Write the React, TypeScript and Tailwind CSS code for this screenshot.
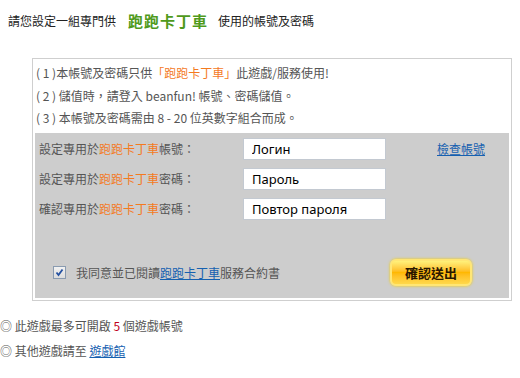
import React from 'react';

const font = { fontFamily: '"Noto Sans CJK TC", "Noto Sans", sans-serif' };

const Kart = () => <span className="text-[#f47a1f]">跑跑卡丁車</span>;

const rows = [
    { prefix: '設定專用於', suffix: '帳號：', value: 'Логин', link: true },
    { prefix: '設定專用於', suffix: '密碼：', value: 'Пароль', link: false },
    { prefix: '確認專用於', suffix: '密碼：', value: 'Повтор пароля', link: false },
];

export default function App() {
    return (
        <div className="w-[520px] h-[378px] bg-white text-[12px] text-[#555] overflow-hidden" style={font}>
            <div className="flex items-center h-[20px] mt-[11px] pl-[8px] text-[#222]">
                <span>請您設定一組專門供</span>
                <span className="ml-[12px] mr-[10px] text-[15px] font-bold tracking-[1px] text-[#4f9a1c]">跑跑卡丁車</span>
                <span>使用的帳號及密碼</span>
            </div>

            <div className="ml-[32px] mt-[27px] w-[480px] border border-[#cfcfcf] p-[2px]">
                <div className="pt-[1px] pl-[1px] leading-[22.5px] text-[#555]">
                    <p>( 1 )本帳號及密碼只供<span className="text-[#f47a1f]">「跑跑卡丁車」</span>此遊戲/服務使用!</p>
                    <p>( 2 ) 儲值時，請登入 beanfun! 帳號、密碼儲值。</p>
                    <p>( 3 ) 本帳號及密碼需由 8 - 20 位英數字組合而成。</p>
                </div>

                <div className="mt-[3px] bg-[#cdcdcd] pt-[1px] pb-[11px]">
                    {rows.map(row => (
                        <div key={row.value} className="flex items-center h-[30px] pl-[4px]">
                            <div className="w-[204px] text-[#555]">
                                {row.prefix}<Kart />{row.suffix}
                            </div>
                            <input
                                readOnly
                                defaultValue={row.value}
                                className="w-[143px] h-[22px] bg-white border border-[#c3c9d1] pl-[8px] text-[13px] text-black outline-none"
                                style={{ fontFamily: '"Noto Sans", "DejaVu Sans", sans-serif' }}
                            />
                            {row.link && (
                                <a href="#" className="ml-[51px] text-[#1560b0] underline">檢查帳號</a>
                            )}
                        </div>
                    ))}

                    <div className="flex items-center mt-[35px] h-[28px] pl-[18px] pr-[37px]">
                        <span className="w-[13px] h-[13px] border border-[#8a9bb0] bg-gradient-to-b from-[#f2f2f2] to-[#dcdcdc] flex items-center justify-center">
                            <svg width="9" height="9" viewBox="0 0 9 9">
                                <path d="M1.5 4.5 L3.5 7 L7.5 1.5" stroke="#2450a0" strokeWidth="1.8" fill="none" />
                            </svg>
                        </span>
                        <span className="ml-[10px] text-[#555]">
                            我同意並已閱讀<a href="#" className="text-[#1560b0] underline">跑跑卡丁車</a>服務合約書
                        </span>
                        <div className="flex-1" />
                        <button className="w-[82px] h-[27px] rounded-[6px] border-2 border-[#ffe675] bg-gradient-to-b from-[#fff17a] via-[#ffb800] to-[#ffd84a] shadow-[0_0_3px_#f5d000] text-[13px] font-bold text-[#2a1600]">
                            確認送出
                        </button>
                    </div>
                </div>
            </div>

            <div className="mt-[12px] leading-[25px] text-[#555]">
                <p>◎ 此遊戲最多可開啟 <span className="text-[#c0001a]">5</span> 個遊戲帳號</p>
                <p>◎ 其他遊戲請至 <a href="#" className="text-[#1560b0] underline">遊戲館</a></p>
            </div>
        </div>
    );
}
